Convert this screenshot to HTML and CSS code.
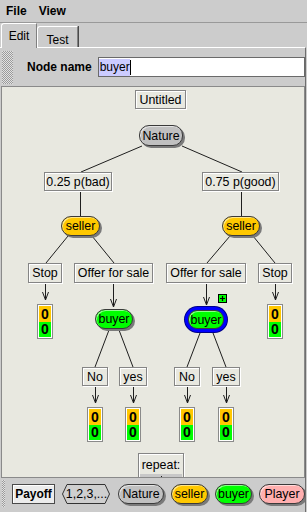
FILE: index.html
```html
<!DOCTYPE html>
<html>
<head>
<meta charset="utf-8">
<title>Game tree editor</title>
<link rel="stylesheet" href="styles.css">
</head>
<body>
<div class="menubar">
  <span class="menu">File</span>
  <span class="menu">View</span>
</div>
<div class="tabstrip">
  <div class="tab active">Edit</div>
  <div class="tab">Test</div>
</div>
<div class="panel">
  <div class="toolbar top">
    <div class="grip"></div>
    <span class="field-label">Node name</span>
    <div class="field"><span class="sel">buyer</span><span class="caret"></span></div>
  </div>
  <div class="canvas">
    <div class="stage">
      <svg class="edges" width="307" height="512" viewBox="0 0 307 512">
        <g stroke="#1e1e1e" stroke-width="1" fill="none">
          <path d="M142 146 L81 172"/>
          <path d="M182 146 L242 172"/>
          <path d="M80.5 190 V216"/>
          <path d="M241.5 190 V216"/>
          <path d="M68 236 L46 263"/>
          <path d="M92 236 L114 263"/>
          <path d="M230 236 L207 263"/>
          <path d="M253 236 L275 263"/>
          <path d="M45.5 283 V300 M42.5 292 L45.5 300 L48.5 292"/>
          <path d="M113.5 283 V307 M110.5 299 L113.5 307 L116.5 299"/>
          <path d="M206.5 283 V305 M203.5 297 L206.5 305 L209.5 297"/>
          <path d="M275.5 283 V300 M272.5 292 L275.5 300 L278.5 292"/>
          <path d="M109 330 L95 367"/>
          <path d="M119 330 L133 367"/>
          <path d="M200 333 L187 367"/>
          <path d="M213 333 L226 367"/>
          <path d="M95.5 386 V403 M92.5 395 L95.5 403 L98.5 395"/>
          <path d="M133.5 386 V403 M130.5 395 L133.5 403 L136.5 395"/>
          <path d="M187.5 386 V403 M184.5 395 L187.5 403 L190.5 395"/>
          <path d="M226.5 386 V403 M223.5 395 L226.5 403 L229.5 395"/>
        </g>
      </svg>

      <div class="node box" style="left:135px;top:90px;width:51px">Untitled</div>
      <div class="node pill nature" style="left:139px;top:125px;width:44px;height:21px">Nature</div>

      <div class="node box" style="left:44px;top:172px;width:68px">0.25 p(bad)</div>
      <div class="node box" style="left:202px;top:172px;width:77px">0.75 p(good)</div>

      <div class="node pill seller" style="left:61px;top:216px;width:39px">seller</div>
      <div class="node pill seller" style="left:222px;top:216px;width:38px">seller</div>

      <div class="node box tall" style="left:28px;top:263px;width:34px">Stop</div>
      <div class="node box tall" style="left:74px;top:263px;width:79px">Offer for sale</div>
      <div class="node box tall" style="left:166px;top:263px;width:80px">Offer for sale</div>
      <div class="node box tall" style="left:258px;top:263px;width:34px">Stop</div>

      <div class="node payoff" style="left:37px;top:304px"><span class="p1">0</span><span class="p2">0</span></div>
      <div class="node payoff" style="left:267px;top:304px"><span class="p1">0</span><span class="p2">0</span></div>

      <div class="node pill buyer" style="left:95px;top:309px;width:38px">buyer</div>
      <div class="node selected" style="left:185px;top:307px"><div class="pill buyer inner">buyer</div></div>
      <div class="node badge" style="left:218px;top:294px">
        <svg width="7" height="7" viewBox="0 0 7 7"><path d="M3.5 1 V6 M1 3.5 H6" stroke="#000" stroke-width="1.2"/></svg>
      </div>

      <div class="node box" style="left:82px;top:367px;width:26px">No</div>
      <div class="node box" style="left:119px;top:367px;width:28px">yes</div>
      <div class="node box" style="left:174px;top:367px;width:26px">No</div>
      <div class="node box" style="left:212px;top:367px;width:28px">yes</div>

      <div class="node payoff" style="left:87px;top:407px"><span class="p1">0</span><span class="p2">0</span></div>
      <div class="node payoff" style="left:125px;top:407px"><span class="p1">0</span><span class="p2">0</span></div>
      <div class="node payoff" style="left:179px;top:407px"><span class="p1">0</span><span class="p2">0</span></div>
      <div class="node payoff" style="left:218px;top:407px"><span class="p1">0</span><span class="p2">0</span></div>

      <div class="node repeat" style="left:138px;top:453px">
        <span class="repeat-label">repeat:</span>
        <span class="repeat-body"><span class="repeat-stem"></span></span>
      </div>
    </div>
  </div>
  <div class="toolbar bottom">
    <div class="grip small"></div>
    <button class="btn">Payoff</button>
    <div class="hex">
      <svg class="hex-shape" width="49" height="20" viewBox="0 0 49 20"><polygon points="5,0.5 43,0.5 47.5,10 43,19.5 5,19.5 0.5,10" fill="#cfcfcf" stroke="#333"/></svg>
      <span class="hex-text">1,2,3,...</span>
    </div>
    <div class="pill chip nature w-nature">Nature</div>
    <div class="pill chip seller w-seller">seller</div>
    <div class="pill chip buyer w-buyer">buyer</div>
    <div class="pill chip player w-player">Player</div>
  </div>
</div>
</body>
</html>
```

FILE: styles.css
```css
* { box-sizing: border-box; }
html, body { margin: 0; padding: 0; }
body {
  width: 307px;
  height: 512px;
  overflow: hidden;
  background: #cccccc;
  font-family: "Liberation Sans", Arial, sans-serif;
  font-size: 12px;
  color: #000;
}

.menubar {
  height: 23px;
  border-bottom: 1px solid #999999;
  display: flex;
  gap: 12px;
  padding: 4px 0 0 6px;
  font-weight: bold;
  line-height: 14px;
}

.tabstrip {
  height: 24px;
  display: flex;
  align-items: flex-end;
  padding-left: 1px;
  position: relative;
  z-index: 1;
}
.tab {
  width: 41px;
  height: 21px;
  text-align: center;
  padding-top: 6px;
  line-height: 14px;
  border-top: 1px solid #fff;
  border-left: 1px solid #fff;
  border-right: 1px solid #808080;
  border-radius: 3px 0 0 0;
  box-shadow: 1px 0 0 #4a4a4a;
}
.tab.active {
  width: 36px;
  height: 25px;
  margin-bottom: -1px;
  padding-top: 5px;
  background: #cccccc;
  box-shadow: none;
}

.panel {
  width: 306px;
  height: 465px;
  border-top: 1px solid #fff;
  border-right: 1px solid #6e6e6e;
}

.toolbar.top {
  height: 38px;
  display: flex;
  align-items: center;
  padding-left: 2px;
}
.grip {
  width: 11px;
  height: 33px;
  background: repeating-conic-gradient(#9a9a9a 0 25%, #e2e2e2 0 50%) 0 0 / 2px 2px;
}
.grip.small { height: 27px; }
.field-label {
  font-weight: bold;
  margin-left: 14px;
  line-height: 14px;
}
.field {
  margin-left: 6px;
  width: 207px;
  height: 20px;
  background: #fff;
  border: 1px solid #6a6a6a;
  display: flex;
  align-items: center;
  line-height: 15px;
  padding-left: 0;
}
.sel { background: #ccccff; padding: 1px 0 1px 1px; }
.caret { width: 1px; height: 15px; background: #000; }

.canvas {
  margin-left: 1px;
  width: 304px;
  height: 392px;
  border: 1px solid #8a8a8a;
  background: #e8e8e0;
  position: relative;
  overflow: hidden;
}
.stage {
  position: absolute;
  left: -2px;
  top: -87px;
  width: 307px;
  height: 512px;
}
.edges { position: absolute; left: 0; top: 0; }

.node { position: absolute; }
.box {
  height: 19px;
  border: 1px solid #858585;
  box-shadow: inset 1px 1px 0 #fff, 1px 1px 0 #fff;
  display: flex;
  align-items: center;
  justify-content: center;
  line-height: 14px;
  white-space: nowrap;
  font-size: 12.4px;
}
.box.tall { height: 20px; }

.pill {
  height: 20px;
  border: 1px solid #3a3a3a;
  border-radius: 10px;
  box-shadow: 2px 2px 0 #7a7a7a, inset 1px 1px 0 rgba(255,255,255,0.55);
  display: flex;
  align-items: center;
  justify-content: center;
  line-height: 14px;
  white-space: nowrap;
  font-size: 12.4px;
}
.nature { background: #c0c0c0; }
.seller { background: #ffc800; }
.buyer { background: #00ff00; }
.player { background: #ffafaf; }

.selected {
  width: 42px;
  height: 25px;
  border: 3px solid #0000ff;
  border-radius: 13px;
  box-shadow: 0 0 0 1px #00008a;
  background: #0000ff;
}
.selected .inner {
  width: 36px;
  height: 19px;
  border-radius: 9px;
  box-shadow: inset 1px 1px 0 rgba(255,255,255,0.55);
}

.badge {
  width: 9px;
  height: 9px;
  background: #00ff00;
  border: 1px solid #000;
  display: flex;
}

.payoff {
  width: 16px;
  height: 35px;
  border: 1px solid #8a8a8a;
  background: #fff;
  padding: 1px;
  display: flex;
  flex-direction: column;
  font-weight: bold;
  font-size: 14px;
  line-height: 14px;
}
.payoff span {
  flex: 1;
  display: flex;
  align-items: center;
  justify-content: center;
}
.payoff .p1 { background: #ffc800; }
.payoff .p2 { background: #00ff00; }

.repeat {
  width: 46px;
  height: 40px;
  border: 1px solid #858585;
  box-shadow: inset 1px 1px 0 #fff, 1px 1px 0 #fff;
  display: flex;
  flex-direction: column;
  padding: 1px 1px 0 1px;
}
.repeat-label { text-align: center; line-height: 14px; padding-top: 3px; height: 19px; font-size: 12.4px; }
.repeat-body { flex: 1; background: #c8c8c8; position: relative; display: block; }
.repeat-stem { position: absolute; left: 21px; top: 2px; width: 1px; height: 6px; background: #222; }

.toolbar.bottom {
  height: 31px;
  display: flex;
  align-items: center;
  gap: 7px;
  padding-left: 2px;
  overflow: hidden;
}
.btn {
  width: 43px;
  height: 20px;
  padding: 0;
  margin: 0;
  border: 1px solid #4a4a4a;
  box-shadow: inset 1px 1px 0 #fff;
  background: #ececec;
  font-family: "Liberation Sans", Arial, sans-serif;
  font-weight: bold;
  font-size: 12px;
  color: #000;
  flex-shrink: 0;
}
.hex {
  width: 49px;
  height: 20px;
  position: relative;
  display: flex;
  align-items: center;
  justify-content: center;
  flex-shrink: 0;
}
.hex-shape { position: absolute; left: 0; top: 0; }
.hex-text { position: relative; line-height: 14px; font-size: 12.4px; }
.chip { flex-shrink: 0; }
.w-nature { width: 46px; }
.w-seller { width: 37px; }
.w-buyer { width: 37px; }
.w-player { width: 46px; }
```
